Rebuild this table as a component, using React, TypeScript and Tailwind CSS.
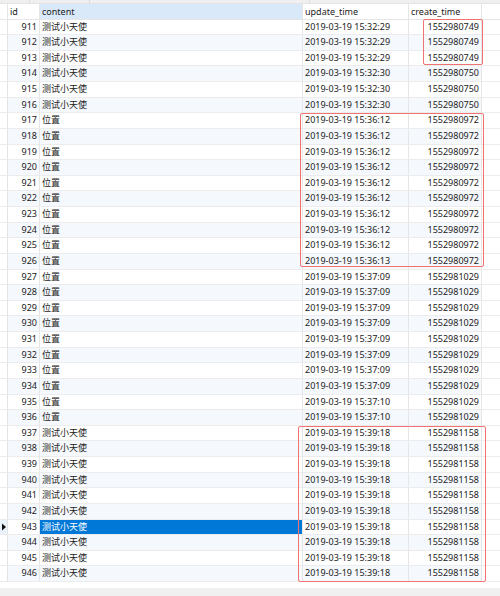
const ROW_H = 15.63;

type Row = { id: number; content: string; update: string; create: string };

function build(): Row[] {
  const out: Row[] = [];
  const push = (from: number, to: number, content: string, update: string, create: string) => {
    for (let i = from; i <= to; i++) out.push({ id: i, content, update, create });
  };
  push(911, 913, "测试小天使", "2019-03-19 15:32:29", "1552980749");
  push(914, 916, "测试小天使", "2019-03-19 15:32:30", "1552980750");
  push(917, 925, "位置", "2019-03-19 15:36:12", "1552980972");
  push(926, 926, "位置", "2019-03-19 15:36:13", "1552980972");
  push(927, 934, "位置", "2019-03-19 15:37:09", "1552981029");
  push(935, 936, "位置", "2019-03-19 15:37:10", "1552981029");
  push(937, 946, "测试小天使", "2019-03-19 15:39:18", "1552981158");
  return out;
}

const rows = build();
const SELECTED = 943;

const cols = "grid grid-cols-[8px_32px_263px_106px_73px_1fr]";

export default function App() {
  return (
    <div
      className="relative w-[500px] h-[596px] overflow-hidden bg-white text-[9px] text-[#222]"
      style={{ fontFamily: '"Noto Sans", "Noto Sans CJK SC", sans-serif' }}
    >
      {/* strip above the header */}
      <div className="flex h-[4px] bg-[#f0f0f0] border-b border-[#e3e3e3]">
        <div className="w-[30px] border-r border-[#dcdcdc]" />
        <div className="w-[60px] border-r border-[#dcdcdc]" />
        <div className="w-[220px] border-r border-[#dcdcdc]" />
      </div>

      {/* header */}
      <div className={`${cols} h-[15.5px] border-b border-[#e6e6e6] leading-[15px]`}>
        <div className="border-r border-[#e6e6e6]" />
        <div className="border-r border-[#e6e6e6] pl-[2px]">id</div>
        <div className="border-r border-[#e6e6e6] bg-[#d9e9f9] pl-[2px]">content</div>
        <div className="border-r border-[#e6e6e6] pl-[2px]">update_time</div>
        <div className="border-r border-[#e6e6e6] pl-[2px]">create_time</div>
        <div />
      </div>

      {/* rows */}
      {rows.map((r) => {
        const sel = r.id === SELECTED;
        const stripe = r.id % 2 === 0 ? "bg-[#f5f8fc]" : "bg-white";
        return (
          <div
            key={r.id}
            className={`${cols} border-b border-[#ececec] leading-[14px]`}
            style={{ height: ROW_H }}
          >
            <div className={`border-r border-[#e3e3e3] flex items-center ${sel ? "bg-[#eaf2fb]" : "bg-white"}`}>
              {sel && (
                <svg width="6" height="8" viewBox="0 0 6 8" className="ml-[1px]">
                  <path d="M1 0.5 L5 4 L1 7.5 Z" fill="#111" />
                </svg>
              )}
            </div>
            <div className={`border-r border-[#e6e6e6] text-right pr-[2px] ${stripe}`}>{r.id}</div>
            <div
              className={`border-r border-[#e6e6e6] pl-[2px] ${sel ? "bg-[#0078d7] text-white" : stripe}`}
            >
              {r.content}
            </div>
            <div className={`border-r border-[#e6e6e6] pl-[2px] ${stripe}`}>{r.update}</div>
            <div className={`border-r border-[#e6e6e6] text-right pr-[2px] ${stripe}`}>{r.create}</div>
            <div className="bg-white" />
          </div>
        );
      })}

      {/* footer toolbar, mostly cut off */}
      <div className="mt-[6px] h-[10px] bg-[#f0f0f0] flex items-end gap-[12px] pl-[2px]">
        <span className="block w-[3px] h-[2px] bg-[#333]" />
        <span className="block w-[3px] h-[2px] bg-[#333] ml-[44px]" />
        <span className="block w-[4px] h-[2px] bg-[#333] ml-[2px]" />
        <span className="block w-[4px] h-[2px] bg-[#333]" />
      </div>

      {/* red highlight boxes */}
      <div className="absolute left-[423px] top-[19px] w-[60px] h-[46px] border border-[#f07272] rounded-[2px]" />
      <div className="absolute left-[300px] top-[113px] w-[184px] h-[154px] border border-[#f07272] rounded-[2px]" />
      <div className="absolute left-[298px] top-[426px] w-[188px] h-[156px] border border-[#f07272] rounded-[2px]" />
    </div>
  );
}
